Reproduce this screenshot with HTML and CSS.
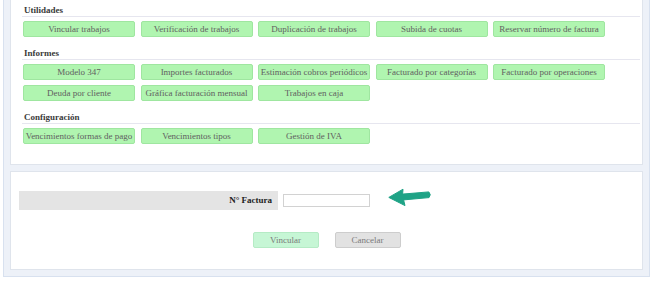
FILE: index.html
```html
<!DOCTYPE html>
<html lang="es">
<head>
  <meta charset="UTF-8">
  <title>Trabajos - Utilidades</title>
  <link rel="stylesheet" href="styles.css">
</head>
<body>
  <div class="wrap">
    <!-- Menu de utilidades, informes y configuracion -->
    <div class="panel panel-menu">
      <div class="section">
        <div class="section-title">Utilidades</div>
        <div class="btn-grid">
          <a class="menu-btn">Vincular trabajos</a>
          <a class="menu-btn">Verificación de trabajos</a>
          <a class="menu-btn">Duplicación de trabajos</a>
          <a class="menu-btn">Subida de cuotas</a>
          <a class="menu-btn">Reservar número de factura</a>
        </div>
      </div>
      <div class="section">
        <div class="section-title">Informes</div>
        <div class="btn-grid">
          <a class="menu-btn">Modelo 347</a>
          <a class="menu-btn">Importes facturados</a>
          <a class="menu-btn">Estimación cobros periódicos</a>
          <a class="menu-btn">Facturado por categorías</a>
          <a class="menu-btn">Facturado por operaciones</a>
          <a class="menu-btn">Deuda por cliente</a>
          <a class="menu-btn">Gráfica facturación mensual</a>
          <a class="menu-btn">Trabajos en caja</a>
        </div>
      </div>
      <div class="section">
        <div class="section-title">Configuración</div>
        <div class="btn-grid">
          <a class="menu-btn">Vencimientos formas de pago</a>
          <a class="menu-btn">Vencimientos tipos</a>
          <a class="menu-btn">Gestión de IVA</a>
        </div>
      </div>
    </div>

    <!-- Formulario de vinculacion -->
    <div class="panel panel-form">
      <div class="form-row">
        <label class="form-label" for="num-factura">N° Factura</label>
        <input type="text" id="num-factura" class="form-input">
        <svg class="hint-arrow" width="44" height="22" viewBox="0 0 44 22">
          <path d="M0.8 11.4 L15 3.2 L14.6 8.1 L40.8 5.9 Q43.6 8.6 41 11.6 L15.6 13.9 L17 19.6 Z"
                fill="#1fa386" stroke="#1fa386" stroke-width="1" stroke-linejoin="round"/>
        </svg>
      </div>
      <div class="form-actions">
        <button class="btn btn-ok">Vincular</button>
        <button class="btn btn-cancel">Cancelar</button>
      </div>
    </div>
  </div>
</body>
</html>
```

FILE: styles.css
```css
/* Colores generales */
:root {
  --wrap-bg: #edf1f8;
  --wrap-border: #d8e1ef;
  --panel-border: #dfe4ec;
  --btn-green: #b0f5b0;
  --btn-green-border: #9fe6a0;
  --line-color: #e6e6ef;
  --text-color: #3a3a3a;
  --serif: "Liberation Serif", Tinos, "Times New Roman", "DejaVu Serif", serif;
}

body {
  margin: 0;
  font-family: var(--serif);
  font-size: 9px;
  color: var(--text-color);
  background: #fff;
}

.wrap {
  margin: -18px 4px 0 3px;
  padding: 6px;
  background: var(--wrap-bg);
  border: 1px solid var(--wrap-border);
}

.panel {
  background: #fff;
  border: 1px solid var(--panel-border);
}

.panel + .panel {
  margin-top: 6px;
}

/* Menu */
.panel-menu {
  padding: 14px 2px 20px 11px;
}

.section + .section {
  margin-top: 10px;
}

.section-title {
  font-weight: bold;
  line-height: 12px;
  padding-left: 2px;
  border-bottom: 1px solid var(--line-color);
  color: #3a3a3a;
}

.btn-grid {
  display: flex;
  flex-wrap: wrap;
  gap: 5px 5.5px;
  margin-top: 4px;
  padding-left: 1px;
}

.menu-btn {
  box-sizing: border-box;
  width: 112px;
  height: 16px;
  line-height: 14px;
  text-align: center;
  white-space: nowrap;
  overflow: hidden;
  color: #606060;
  background: var(--btn-green);
  border: 1px solid var(--btn-green-border);
  border-radius: 2px;
  cursor: pointer;
}

/* Formulario */
.panel-form {
  padding: 19px 8px 21px 8px;
}

.form-row {
  display: flex;
  align-items: center;
}

.form-label {
  box-sizing: border-box;
  width: 259px;
  height: 19px;
  line-height: 19px;
  padding-right: 6px;
  text-align: right;
  font-weight: bold;
  color: #222;
  background: #e4e4e4;
}

.form-input {
  box-sizing: border-box;
  width: 87px;
  height: 13px;
  margin: 0 0 0 5px;
  padding: 0 2px;
  border: 1px solid #d2d2d2;
  font-family: var(--serif);
  font-size: 9px;
}

.hint-arrow {
  display: block;
  margin: -8px 0 0 18px;
}

.form-actions {
  display: flex;
  justify-content: center;
  gap: 16px;
  margin-top: 22px;
}

.btn {
  box-sizing: border-box;
  width: 66px;
  height: 16px;
  padding: 0;
  font-family: var(--serif);
  font-size: 9px;
  color: #7a7a7a;
  border-radius: 2px;
  cursor: pointer;
}

.btn-ok {
  background: #c6f6d5;
  border: 1px solid #b5ebc5;
}

.btn-cancel {
  background: #e2e2e2;
  border: 1px solid #cdcdcd;
}
```
